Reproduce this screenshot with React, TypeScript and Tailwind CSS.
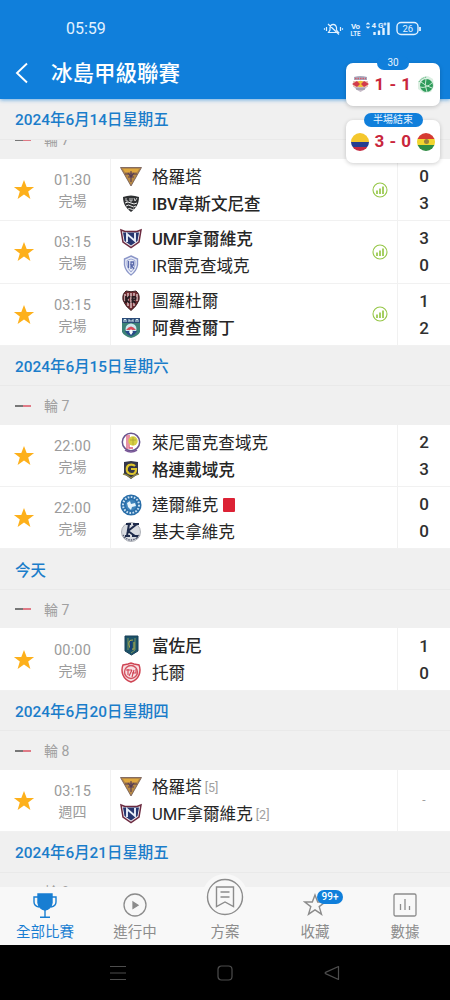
import type { ReactNode } from "react";

type Team = { name: string; crest: string; bold?: boolean; rank?: string; red?: boolean; score?: string };
type Match = { time: string; status: string; stats?: boolean; teams: Team[] };
type Section = { date: string; round: string; matches: Match[] };

const firstMatches: Match[] = [
  {
    time: "01:30", status: "完場", stats: true,
    teams: [
      { name: "格羅塔", crest: "grotta", score: "0" },
      { name: "IBV韋斯文尼查", crest: "ibv", bold: true, score: "3" },
    ],
  },
  {
    time: "03:15", status: "完場", stats: true,
    teams: [
      { name: "UMF拿爾維克", crest: "umf", bold: true, score: "3" },
      { name: "IR雷克查域克", crest: "ir", score: "0" },
    ],
  },
  {
    time: "03:15", status: "完場", stats: true,
    teams: [
      { name: "圖羅杜爾", crest: "throttur", score: "1" },
      { name: "阿費查爾丁", crest: "afture", bold: true, score: "2" },
    ],
  },
];

const sections: Section[] = [
  {
    date: "2024年6月15日星期六", round: "輪 7",
    matches: [
      {
        time: "22:00", status: "完場",
        teams: [
          { name: "萊尼雷克查域克", crest: "leiknir", score: "2" },
          { name: "格連戴域克", crest: "grindavik", bold: true, score: "3" },
        ],
      },
      {
        time: "22:00", status: "完場",
        teams: [
          { name: "達爾維克", crest: "dalvik", red: true, score: "0" },
          { name: "基夫拿維克", crest: "keflavik", score: "0" },
        ],
      },
    ],
  },
  {
    date: "今天", round: "輪 7",
    matches: [
      {
        time: "00:00", status: "完場",
        teams: [
          { name: "富佐尼", crest: "fjolnir", bold: true, score: "1" },
          { name: "托爾", crest: "thor", score: "0" },
        ],
      },
    ],
  },
  {
    date: "2024年6月20日星期四", round: "輪 8",
    matches: [
      {
        time: "03:15", status: "週四",
        teams: [
          { name: "格羅塔", crest: "grotta", rank: "[5]" },
          { name: "UMF拿爾維克", crest: "umf", rank: "[2]" },
        ],
      },
    ],
  },
  { date: "2024年6月21日星期五", round: "輪 8", matches: [] },
];

const crests: Record<string, ReactNode> = {
  grotta: (
    <>
      <path d="M.5 1.500h21L11 20z" fill="#b98a45" stroke="#6d5552" strokeWidth=".8" />
      <path d="M3 3h16l-2 3H5z" fill="#e0a83e" />
      <path d="M5 8h12M8 11h6M11 5v11M8 7l3 4 3-4" stroke="#553c55" strokeWidth="1.100" fill="none" />
    </>
  ),
  ibv: (
    <>
      <path d="M3 4q8-3 16 0c0 7-3 11-8 15C6 15 3 11 3 4z" fill="#2f3133" />
      <path d="M5 10q3-2 6 0t6 0M6 13q2.500-2 5 0t5 0M8 16q1.500-1 3 0t3 0" stroke="#eee" fill="none" />
      <path d="M6 5v3h2M10 5v3h2v-3M14 5l1 3 2-3" stroke="#ddd" strokeWidth=".9" fill="none" />
    </>
  ),
  umf: (
    <>
      <path d="M1 2l4 1.500h12L21 2l-2 12-8 5.500L3 14z" fill="#f3eef2" stroke="#6c2b40" strokeWidth="1.500" />
      <path d="M3 4.500h16l-1.500 8.500L11 17.500 4.500 13z" fill="#26366f" />
      <path d="M7 14V6l8 7V5" stroke="#e9effa" strokeWidth="1.900" fill="none" />
    </>
  ),
  ir: (
    <>
      <path d="M11 1l6.500 3v6q-1 6-6.500 10Q5.500 16 4.500 10V4z" fill="#e9edf8" stroke="#8b96c8" strokeWidth="1.400" />
      <path d="M11 4l4 1.500V10q-1 4-4 7-3-3-4-7V5.500z" fill="none" stroke="#9da7d2" />
      <path d="M8.500 6v7M11 14V7h2.500v3H11l3 4" stroke="#5968aa" strokeWidth="1.300" fill="none" />
    </>
  ),
  throttur: (
    <>
      <path d="M6 1q5 1.500 10 0 4 3 3 9-2 6-8 10.500Q5 16 3 10 2 4 6 1z" fill="#702b31" stroke="#3a2023" />
      <path d="M5 4v7M8 3v13M11 3v15M14 3v13M17 4v7" stroke="#f5e5e5" strokeWidth="1.200" />
      <path d="M6 6v7m4-7-4 4 4 3M12.500 6v7m0-6q4-1 3 2l-3 1 3 3" stroke="#271b20" strokeWidth="1.800" fill="none" />
    </>
  ),
  afture: (
    <>
      <path d="M2 2h18v13q-2 4-9 6-7-2-9-6z" fill="#3d8277" />
      <path d="M2 1h18v5H2z" fill="#2b4c78" />
      <path d="M4 5V2.500h2V5M9 5V2.500l2 2 2-2V5M16 5V2.500h2V5" stroke="#d7ecf3" fill="none" />
      <circle cx="11" cy="12" r="5.500" fill="#cce9ee" />
      <path d="M6 13q5-7 10 0z" fill="#d84c59" />
      <path d="M5 14h12q-2 4-6 5-4-1-6-5z" fill="#284a88" />
      <path d="M11 12l2 3-2 3-2-3z" fill="#fff" />
    </>
  ),
  leiknir: (
    <>
      <circle cx="11" cy="10" r="8.700" fill="#fff" stroke="#69558e" strokeWidth="1.500" />
      <path d="M7 3v14M9 3v13h4" stroke="#dc5a77" strokeWidth="1.300" fill="none" />
      <circle cx="13" cy="9" r="4.700" fill="#d7cf44" />
      <path d="M10 8h6M13 5v8" stroke="#a9a334" strokeWidth=".8" />
      <path d="M5 18q6 4 12 0" stroke="#7b5999" strokeWidth="1.600" fill="none" />
    </>
  ),
  grindavik: (
    <>
      <path d="M4 3l7-1 7 1v12l-7 5-7-5z" fill="#34364a" />
      <path d="M15 7q-2-2-6-1-3 2-2 6 1 3 5 3 4 0 4-5h-5" stroke="#dfc62d" strokeWidth="2.200" fill="none" />
      <path d="M3 15l4 1 4 3 4-3 4-1" stroke="#8c8544" fill="none" strokeWidth="1.300" />
    </>
  ),
  dalvik: (
    <>
      <circle cx="11" cy="11" r="10.500" fill="#286da8" />
      <circle cx="11" cy="11" r="8" fill="none" stroke="#c9e0f2" strokeWidth="2" strokeDasharray="1.700 1.400" />
      <circle cx="11" cy="11" r="5.500" fill="#3d83bb" />
      <path d="M7 9l3-2 1 3 4-1 1 3-4 1-1 3-3-3z" fill="#e5f3fb" />
    </>
  ),
  keflavik: (
    <>
      <circle cx="11" cy="11" r="9.500" fill="#d9dce1" stroke="#adb0b7" />
      <path d="M4 16q7 6 14 0M3 14l3 4M19 14l-3 4" stroke="#565c70" strokeWidth="1.300" fill="none" strokeDasharray="1.500 1" />
      <path d="M6 3h5M5 15h5M9 3L7 15M17 3l-9 7 7 5M13 3h6M12 15h6" stroke="#1e2b4b" strokeWidth="2" fill="none" />
    </>
  ),
  fjolnir: (
    <>
      <path d="M5 1h13v15l-6.500 4L5 16z" fill="#1c5268" stroke="#173f57" />
      <path d="M8 3v12M15 3v12l-4 3" stroke="#77945c" fill="none" />
      <path d="M13 5q-5 0-4 5 1 5 5 4V7" stroke="#a6a64f" strokeWidth="1.200" fill="none" />
      <path d="M11 6v9" stroke="#173f78" strokeWidth="2" />
    </>
  ),
  thor: (
    <>
      <path d="M3 3l5-1 3-1 3 1 5 1q2 5 0 10-2 5-8 7-6-2-8-7-2-5 0-10z" fill="#f7e0e3" stroke="#cf4453" strokeWidth="1.500" />
      <circle cx="11" cy="10" r="6.500" fill="none" stroke="#d35360" strokeWidth="1.400" />
      <path d="M6 8h6M8 7v6M12 8l-3 6M12 11h4v-4M14 8l-2 7" stroke="#d14152" strokeWidth="1.100" fill="none" />
    </>
  ),
};

function Crest({ id }: { id: string }) {
  return (
    <svg width="22" height="22" viewBox="0 0 22 22" className="shrink-0">
      {crests[id]}
    </svg>
  );
}

function StatusIcons() {
  return (
    <svg width="100" height="18" viewBox="0 0 100 18" fill="none" stroke="#e3f2ff" strokeWidth="1.200">
      <path d="M5.500 12.500h10l-2-2.500V7.500q-.5-3-3.300-3.200-2.700.2-3.200 3.200V10zM5 4l11 10.500" />
      <path d="M3.500 7v4M1.500 8.200v1.600M17.500 7v4M19.500 8.200v1.600" />
      <g fill="#e3f2ff" stroke="none" fontFamily="Roboto, sans-serif" fontWeight="700">
        <text x="28" y="8.500" fontSize="8" textLength="9">Vo</text>
        <text x="27.500" y="15.500" fontSize="8" textLength="10" lengthAdjust="spacingAndGlyphs">LTE</text>
        <text x="48.500" y="8" fontSize="8" textLength="12">4G</text>
      </g>
      <path d="M43.500 4.500l1.500-1.500 1.500 1.500M43.500 6.500l1.500 1.500 1.500-1.500M60.500 4h3M62 2.500v3" />
      <path d="M51.500 12v3M56 10.500V15M60.500 8v7M65.500 2.500V15" strokeWidth="2.400" />
      <rect x="74" y="2.500" width="21" height="12" rx="4" strokeWidth="1.400" />
      <path d="M97 7v4" strokeWidth="1.800" />
      <text x="79.500" y="12" fontSize="9.500" fill="#e3f2ff" stroke="none" fontFamily="Roboto, sans-serif">26</text>
    </svg>
  );
}

function LiveCard({ label, score, left, right, wide }: { label: string; score: string; left: ReactNode; right: ReactNode; wide?: boolean }) {
  return (
    <div className="relative flex h-[43px] w-[94px] items-center justify-between rounded-[7px] bg-white px-[5px] shadow-[0_1px_4px_rgba(0,0,0,0.2)]">
      <div className="absolute inset-x-0 -top-[7px] flex justify-center">
        <span className={`flex h-[14px] items-center justify-center rounded-full bg-[#107fdb] text-[10px] leading-none text-[#e6f4ff] ${wide ? "w-[59px]" : "w-[32px]"}`}>
          {label}
        </span>
      </div>
      {left}
      <span className="whitespace-pre text-[17px] font-bold tracking-[0.5px] text-[#c9263c]">{score}</span>
      {right}
    </div>
  );
}

function LiveCards() {
  return (
    <div className="absolute left-[346px] top-[63px] z-20 flex flex-col gap-[14px]">
      <LiveCard
        label="30"
        score="1 - 1"
        left={
          <svg width="19" height="19" viewBox="0 0 19 19" className="shrink-0">
            <path d="M3 2q6.500-2 13 0v3H3z" fill="#a7a9bd" />
            <path d="M4 3.500h11" stroke="#d45a6b" strokeWidth="1.500" strokeDasharray="1.500 1" />
            <path d="M2 6h15v6H2z" fill="#e8c4b5" />
            <circle cx="9.500" cy="9" r="3.300" fill="#f0c238" />
            <path d="M1 9l5-3 3 3-3 3zM18 9l-5-3-3 3 3 3z" fill="#d23b4b" />
            <path d="M3 12h13l-3 3-3.500 2L6 15z" fill="#c5bac6" />
            <path d="M5 14h9" stroke="#86869b" />
          </svg>
        }
        right={
          <svg width="19" height="19" viewBox="0 0 19 19" className="shrink-0">
            <path d="M2 7q3-6 10-6l5 3 1 7-3 6-7 1-6-4z" fill="#dcefe2" />
            <circle cx="10.500" cy="10.500" r="6.500" fill="#2e9b5a" />
            <path d="M4 12q6 2 13-5M10 4q-2 6 1 13M5 7q5 4 11 6" stroke="#c7ead2" fill="none" />
            <path d="M3 7q2-4 8-5" stroke="#4cae72" fill="none" strokeDasharray="1.500 1" />
          </svg>
        }
      />
      <LiveCard
        wide
        label="半場結束"
        score="3 - 0"
        left={
          <div className="flex h-[18px] w-[18px] shrink-0 flex-col overflow-hidden rounded-full">
            <div className="h-[9px] bg-[#f4c72d]" />
            <div className="h-[5px] bg-[#263f91]" />
            <div className="h-[4px] bg-[#c52b43]" />
          </div>
        }
        right={
          <div className="flex h-[18px] w-[18px] shrink-0 flex-col overflow-hidden rounded-full">
            <div className="h-[6px] bg-[#d53b32]" />
            <div className="flex h-[6px] items-center justify-center bg-[#f1d52e]">
              <div className="h-[5px] w-[5px] rounded-full bg-[#99803c]" />
            </div>
            <div className="h-[6px] bg-[#2e8b43]" />
          </div>
        }
      />
    </div>
  );
}

function DateBar({ children }: { children: ReactNode }) {
  return (
    <div className="flex h-[40.5px] shrink-0 items-center border-b border-[#e9e9e9] bg-[#f0f0f0] pt-[4px] pl-[15px] text-[15.4px] font-medium text-[#1b7dca]">
      {children}
    </div>
  );
}

function RoundBar({ children }: { children: ReactNode }) {
  return (
    <div className="flex h-[38.5px] shrink-0 items-center bg-[#f0f0f0] pl-[15px] text-[14px] text-[#a0a0a0]">
      <span className="flex h-[2px] w-[16px]">
        <span className="w-1/2 bg-[#777]" />
        <span className="w-1/2 bg-[#e07a86]" />
      </span>
      <span className="ml-[13px] pt-[2px]">{children}</span>
    </div>
  );
}

function MatchRow({ match }: { match: Match }) {
  const played = match.teams[0].score !== undefined;
  return (
    <div className="flex h-[62.3px] shrink-0 border-b border-[#f1f1f1] bg-white">
      <div className="flex w-[48px] items-center justify-center pt-[1px]">
        <svg width="22" height="22" viewBox="0 0 22 22" fill="#fdb01b">
          <path d="M11 1l2.700 7h7.400l-5.900 4.600 2.200 7.300L11 15.600l-6.400 4.300 2.200-7.300L.9 8h7.400z" />
        </svg>
      </div>
      <div className="flex w-[49px] flex-col items-center justify-center pt-[3px] text-[14px] leading-[20px] text-[#9b9b9b]">
        <span className="text-[14.5px] tracking-[0.2px]">{match.time}</span>
        <span>{match.status}</span>
      </div>
      <div className="ml-[13px] flex flex-1 items-center border-x border-[#f1f1f1] pl-[9px]">
        <div className="flex flex-1 flex-col pt-[1px]">
          {match.teams.map((team) => (
            <div key={team.name} className="flex h-[27px] items-center">
              <Crest id={team.crest} />
              <span className={`ml-[10px] whitespace-nowrap pt-[3px] text-[16.6px] text-[#262626] ${team.bold ? "font-medium" : ""}`}>
                {team.name}
              </span>
              {team.rank && <span className="ml-[3px] pt-[1px] text-[12.500px] text-[#a0a0a0]">{team.rank}</span>}
              {team.red && <span className="ml-[5px] h-[14px] w-[12px] rounded-[1px] bg-[#dc2235]" />}
            </div>
          ))}
        </div>
        {match.stats && (
          <svg width="16" height="16" viewBox="0 0 16 16" fill="none" stroke="#96c748" className="mr-[9px]">
            <circle cx="8" cy="8" r="7" strokeWidth="1.100" />
            <path d="M5 8.500V12M8 6.500V12M11 4.500V12" strokeWidth="1.700" />
          </svg>
        )}
      </div>
      <div className="flex w-[52px] flex-col items-center justify-center pt-[1px] text-[17px] font-medium leading-[27px] text-[#303030]">
        {played ? (
          match.teams.map((team) => <span key={team.name}>{team.score}</span>)
        ) : (
          <span className="text-[12px] font-normal text-[#a0a0a0]">-</span>
        )}
      </div>
    </div>
  );
}

function NavItem({ label, active, children }: { label: string; active?: boolean; children: ReactNode }) {
  return (
    <div className={`flex flex-1 flex-col items-center ${active ? "text-[#187ed2]" : "text-[#8c8c8c]"}`}>
      <div className="relative flex h-[36px] items-start justify-center pt-[6px]">{children}</div>
      <span className="text-[14.500px] leading-[20px]">{label}</span>
    </div>
  );
}

export default function App() {
  return (
    <div className="relative flex h-[1000px] w-[450px] flex-col overflow-hidden bg-[#f0f0f0] font-[Roboto,'Noto_Sans_CJK_TC',sans-serif]">
      <header className="z-10 flex h-[99px] shrink-0 flex-col bg-[#107fdb] text-white shadow-[0_1px_4px_rgba(16,127,219,0.6)]">
        <div className="flex h-[49px] items-end justify-between pl-[66px] pr-[27px]">
          <span className="mb-[8px] text-[16px] leading-[24px] text-[#e3f2ff]">05:59</span>
          <div className="mb-[11px]">
            <StatusIcons />
          </div>
        </div>
        <div className="flex h-[48px] items-center pl-[15px]">
          <svg width="14" height="22" viewBox="0 0 14 22" fill="none" stroke="#fff" strokeWidth="1.900">
            <path d="M12 1.500L2 11l10 9.500" />
          </svg>
          <h1 className="ml-[22px] pt-[2px] text-[21.5px] font-medium leading-none">冰島甲級聯賽</h1>
        </div>
      </header>

      <LiveCards />

      <main className="flex min-h-0 flex-1 flex-col overflow-hidden">
        <DateBar>2024年6月14日星期五</DateBar>
        {/* scrolled half way under the sticky date */}
        <div className="flex h-[19.5px] shrink-0 flex-col justify-end overflow-hidden">
          <RoundBar>輪 7</RoundBar>
        </div>
        {firstMatches.map((match, i) => (
          <MatchRow key={i} match={match} />
        ))}
        {sections.map((section) => (
          <div key={section.date} className="shrink-0">
            <DateBar>{section.date}</DateBar>
            <RoundBar>{section.round}</RoundBar>
            {section.matches.map((match, i) => (
              <MatchRow key={i} match={match} />
            ))}
          </div>
        ))}
      </main>

      <nav className="z-10 flex h-[58px] shrink-0 bg-[#f8f8f8]">
        <NavItem label="全部比賽" active>
          <svg width="24" height="26" viewBox="0 0 24 26" fill="none" stroke="currentColor" strokeWidth="1.400">
            <path d="M5 1h14v9q-1 6-7 7-6-1-7-7z" fill="currentColor" />
            <path d="M5 4H1v5q0 4 5 5M19 4h4v5q0 4-5 5M12 17v7M7 24.300h10" />
          </svg>
        </NavItem>
        <NavItem label="進行中">
          <svg width="24" height="24" viewBox="0 0 24 24" fill="none" stroke="currentColor" strokeWidth="1.300">
            <circle cx="12" cy="12" r="11" />
            <path d="M10 9l5 3.200-5 3.200z" fill="currentColor" />
          </svg>
        </NavItem>
        <NavItem label="方案">
          <div className="absolute -top-[13px] flex h-[46px] w-[46px] items-center justify-center rounded-full bg-[#f8f8f8]">
            <svg width="38" height="38" viewBox="0 0 38 38" fill="none" stroke="currentColor" strokeWidth="1.400">
              <circle cx="19" cy="19" r="17.500" />
              <path d="M10.500 9h17v19.500L19 24l-8.500 4.500zM14.500 14h9M14.500 19h9" />
            </svg>
          </div>
        </NavItem>
        <NavItem label="收藏">
          <svg width="24" height="24" viewBox="0 0 24 24" fill="none" stroke="currentColor" strokeWidth="1.400">
            <path d="M12 2l2.700 7h7.500l-6 4.600 2.300 7.600L12 16.800l-6.500 4.400 2.300-7.600-6-4.600h7.500z" />
          </svg>
          <span className="absolute left-[14px] top-[3px] flex h-[14px] w-[26px] items-center justify-center rounded-full bg-[#107fdb] text-[10px] font-medium leading-none text-white">
            99+
          </span>
        </NavItem>
        <NavItem label="數據">
          <svg width="24" height="24" viewBox="0 0 24 24" fill="none" stroke="currentColor" strokeWidth="1.300">
            <rect x="1" y="1" width="22" height="22" rx="1.500" />
            <path d="M7.500 11v6M12 6v11M16.500 13v4" />
          </svg>
        </NavItem>
      </nav>

      <footer className="flex h-[55px] shrink-0 items-center justify-around bg-black px-[64px]">
        <svg width="16" height="16" viewBox="0 0 16 16" fill="none" stroke="#4d4d4d" strokeWidth="1.200">
          <path d="M0 1.500h16M0 8h16M0 14.500h16" />
        </svg>
        <svg width="16" height="16" viewBox="0 0 16 16" fill="none" stroke="#4d4d4d" strokeWidth="1.200">
          <rect x="1" y="1" width="14" height="14" rx="3.500" />
        </svg>
        <svg width="16" height="16" viewBox="0 0 16 16" fill="none" stroke="#4d4d4d" strokeWidth="1.200">
          <path d="M14.500 1.500v13L1.500 8.600q-.8-.6 0-1.200z" strokeLinejoin="round" />
        </svg>
      </footer>
    </div>
  );
}
